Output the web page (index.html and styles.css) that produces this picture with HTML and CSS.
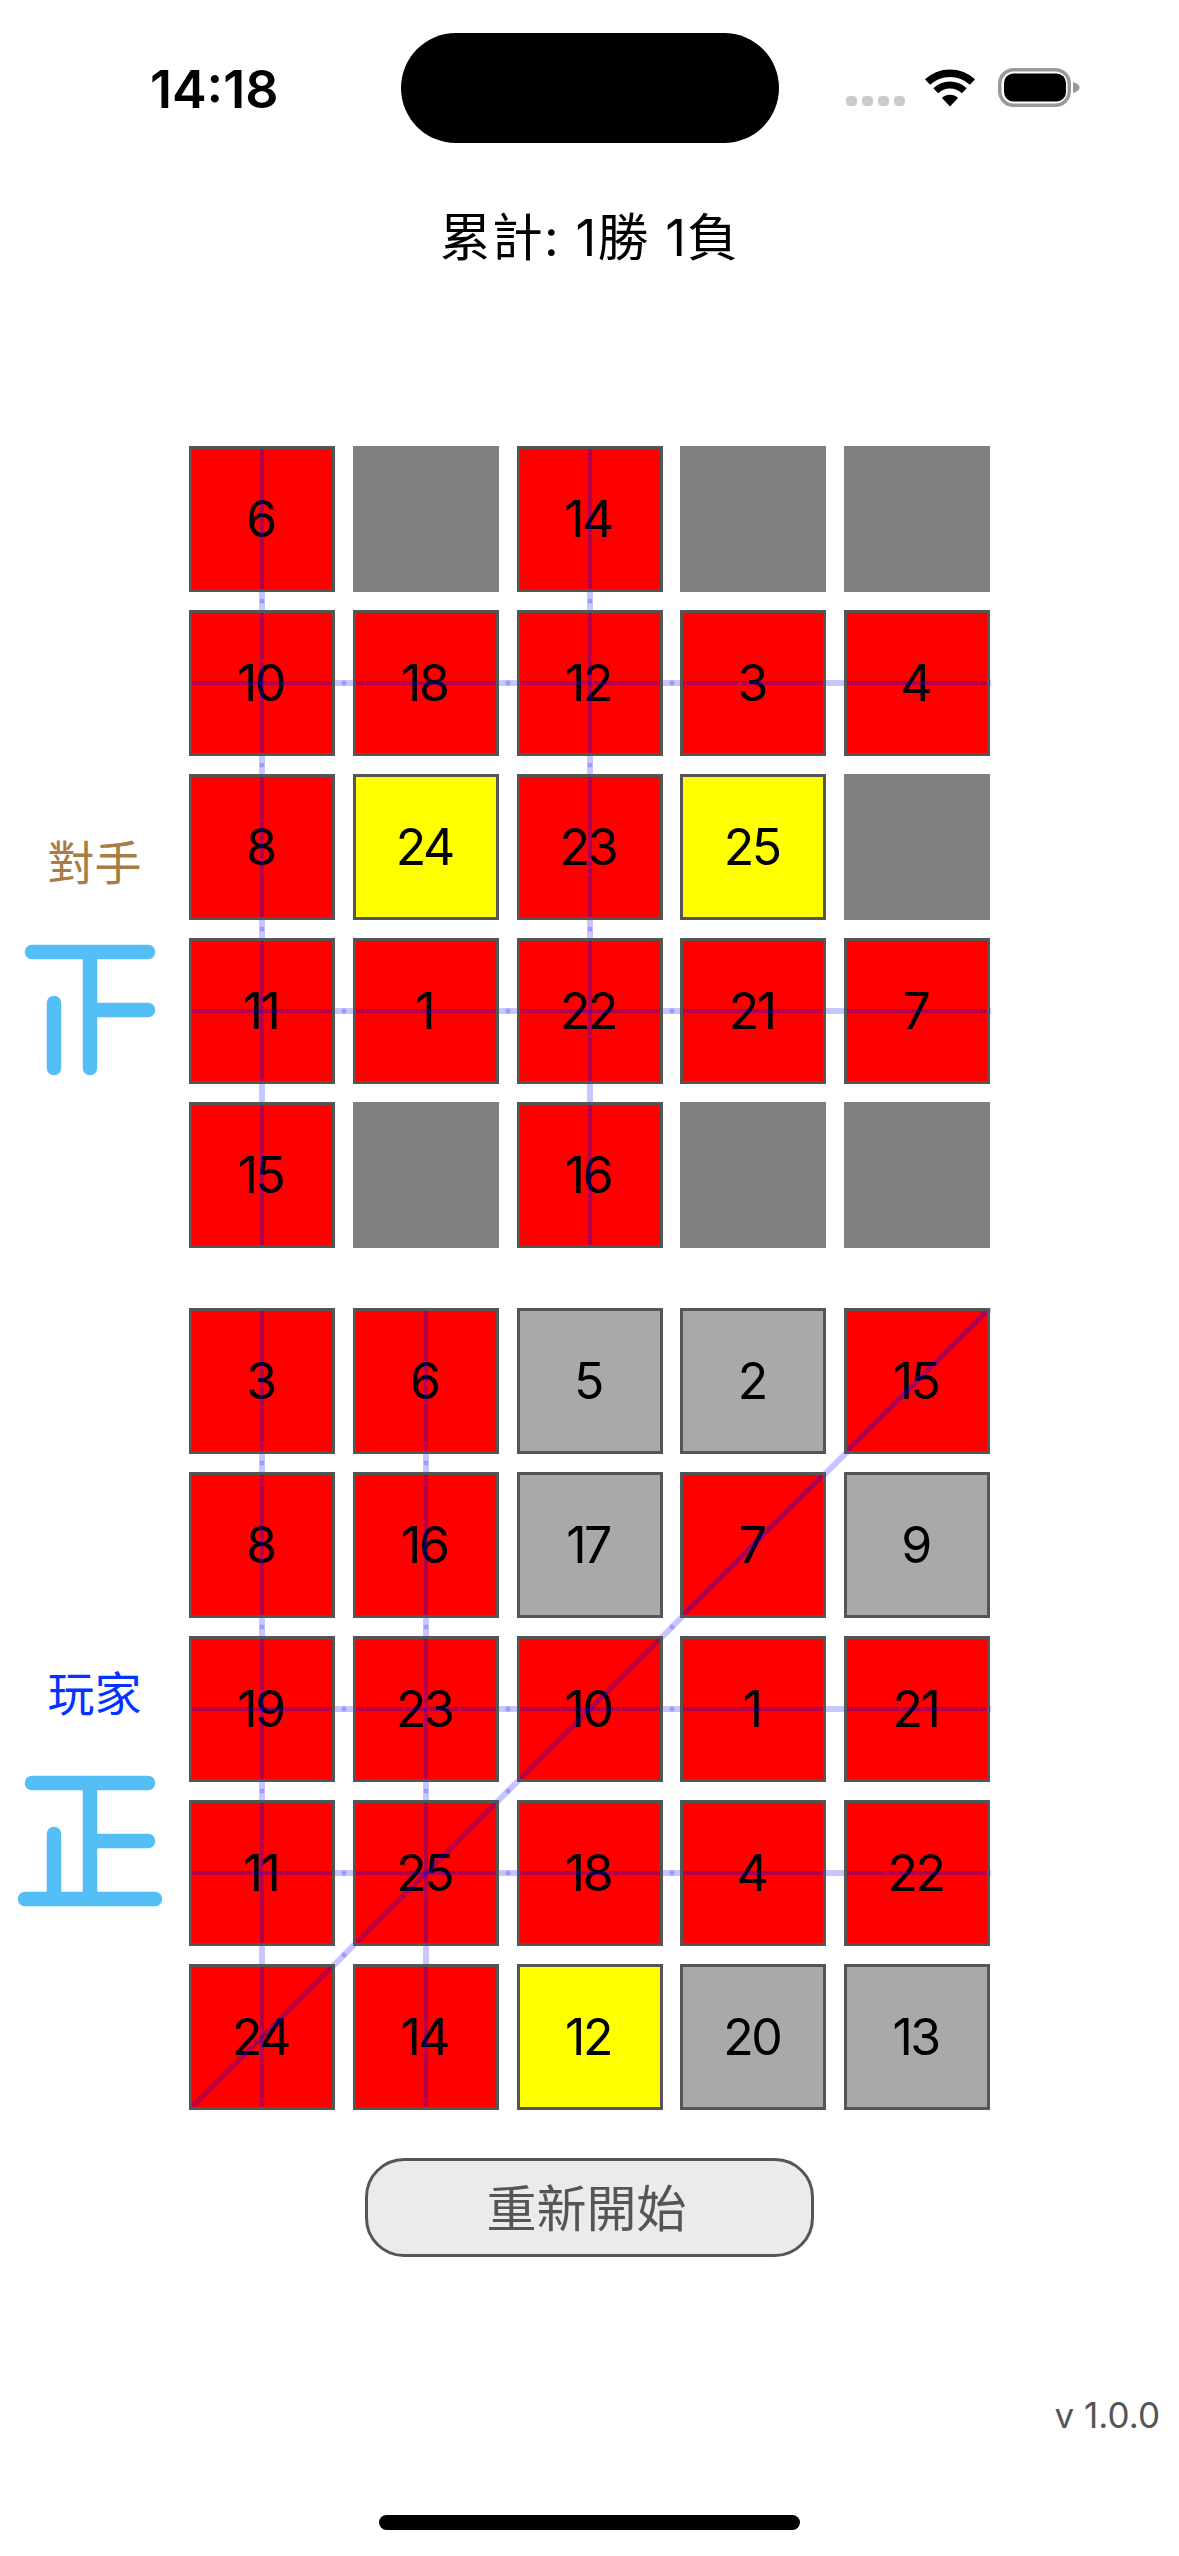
FILE: index.html
```html
<!DOCTYPE html>
<html lang="zh-Hant">
<head>
    <meta charset="UTF-8">
    <meta name="viewport" content="width=device-width, initial-scale=1.0">
    <title>賓果</title>
    <link rel="stylesheet" href="styles.css">
</head>
<body>
    <div class="page">
        <div class="status-bar">
            <div class="time">14:18</div>
            <div class="island"></div>
            <div class="status-icons">
                <div class="signal"><span></span><span></span><span></span><span></span></div>
                <svg class="wifi" width="50" height="38" viewBox="0 0 50 38">
                    <path d="M2.5 13 A33 33 0 0 1 47.5 13" fill="none" stroke="#000" stroke-width="7.5"/>
                    <path d="M10.7 21.7 A21 21 0 0 1 39.3 21.7" fill="none" stroke="#000" stroke-width="7"/>
                    <path d="M25 37.5 L17 29 A11.5 11.5 0 0 1 33 29 Z" fill="#000"/>
                </svg>
                <svg class="battery" width="82" height="39" viewBox="0 0 82 39">
                    <rect x="1.75" y="1.75" width="69.5" height="35.5" rx="14" fill="none" stroke="#999" stroke-width="3.5"/>
                    <rect x="6" y="5.5" width="62" height="28" rx="9.5" fill="#000"/>
                    <path d="M75 14 Q81.5 16 81.5 19.5 Q81.5 23 75 25 Z" fill="#999"/>
                </svg>
            </div>
        </div>

        <div class="score">累計: 1勝 1負</div>

        <div class="match match-opponent">
            <div class="side side-opponent">
                <div class="side-label label-opponent">對手</div>
                <svg class="tally" width="180" height="150" viewBox="0 0 180 150">
                    <path d="M32 20 H148 M90 20 V136 M90 78 H148 M54 71 V136"/>
                </svg>
            </div>
            <div class="board">
                <svg class="wires" width="802" height="802" viewBox="0 0 802 802">
                    <line class="wire" x1="73" y1="0" x2="73" y2="802"/>
                    <line class="wire" x1="401" y1="0" x2="401" y2="802"/>
                    <line class="wire" x1="0" y1="237" x2="802" y2="237"/>
                    <line class="wire" x1="0" y1="565" x2="802" y2="565"/>
                    <line class="knots" pathLength="3" x1="73" y1="155" x2="73" y2="647"/>
                    <line class="knots" pathLength="3" x1="401" y1="155" x2="401" y2="647"/>
                    <line class="knots" pathLength="3" x1="155" y1="237" x2="647" y2="237"/>
                    <line class="knots" pathLength="3" x1="155" y1="565" x2="647" y2="565"/>
                </svg>
                <div class="cell hit">6<i class="mark v"></i></div>
                <div class="cell hidden"></div>
                <div class="cell hit">14<i class="mark v"></i></div>
                <div class="cell hidden"></div>
                <div class="cell hidden"></div>

                <div class="cell hit">10<i class="mark v"></i><i class="mark h"></i></div>
                <div class="cell hit">18<i class="mark h"></i></div>
                <div class="cell hit">12<i class="mark v"></i><i class="mark h"></i></div>
                <div class="cell hit">3<i class="mark h"></i></div>
                <div class="cell hit">4<i class="mark h"></i></div>

                <div class="cell hit">8<i class="mark v"></i></div>
                <div class="cell last">24</div>
                <div class="cell hit">23<i class="mark v"></i></div>
                <div class="cell last">25</div>
                <div class="cell hidden"></div>

                <div class="cell hit">11<i class="mark v"></i><i class="mark h"></i></div>
                <div class="cell hit">1<i class="mark h"></i></div>
                <div class="cell hit">22<i class="mark v"></i><i class="mark h"></i></div>
                <div class="cell hit">21<i class="mark h"></i></div>
                <div class="cell hit">7<i class="mark h"></i></div>

                <div class="cell hit">15<i class="mark v"></i></div>
                <div class="cell hidden"></div>
                <div class="cell hit">16<i class="mark v"></i></div>
                <div class="cell hidden"></div>
                <div class="cell hidden"></div>
            </div>
        </div>

        <div class="match match-player">
            <div class="side side-player">
                <div class="side-label label-player">玩家</div>
                <svg class="tally" width="180" height="150" viewBox="0 0 180 150">
                    <path d="M32 20 H148 M90 20 V136 M90 78 H148 M54 71 V136 M25 136 H155"/>
                </svg>
            </div>
            <div class="board">
                <svg class="wires" width="802" height="802" viewBox="0 0 802 802">
                    <line class="wire" x1="73" y1="0" x2="73" y2="802"/>
                    <line class="wire" x1="237" y1="0" x2="237" y2="802"/>
                    <line class="wire" x1="0" y1="401" x2="802" y2="401"/>
                    <line class="wire" x1="0" y1="565" x2="802" y2="565"/>
                    <line class="wire" x1="0" y1="802" x2="802" y2="0"/>
                    <line class="knots" pathLength="3" x1="73" y1="155" x2="73" y2="647"/>
                    <line class="knots" pathLength="3" x1="237" y1="155" x2="237" y2="647"/>
                    <line class="knots" pathLength="3" x1="155" y1="401" x2="647" y2="401"/>
                    <line class="knots" pathLength="3" x1="155" y1="565" x2="647" y2="565"/>
                    <line class="knots" pathLength="3" x1="155" y1="647" x2="647" y2="155"/>
                </svg>
                <div class="cell hit">3<i class="mark v"></i></div>
                <div class="cell hit">6<i class="mark v"></i></div>
                <div class="cell idle">5</div>
                <div class="cell idle">2</div>
                <div class="cell hit">15<i class="mark d"></i></div>

                <div class="cell hit">8<i class="mark v"></i></div>
                <div class="cell hit">16<i class="mark v"></i></div>
                <div class="cell idle">17</div>
                <div class="cell hit">7<i class="mark d"></i></div>
                <div class="cell idle">9</div>

                <div class="cell hit">19<i class="mark v"></i><i class="mark h"></i></div>
                <div class="cell hit">23<i class="mark v"></i><i class="mark h"></i></div>
                <div class="cell hit">10<i class="mark h"></i><i class="mark d"></i></div>
                <div class="cell hit">1<i class="mark h"></i></div>
                <div class="cell hit">21<i class="mark h"></i></div>

                <div class="cell hit">11<i class="mark v"></i><i class="mark h"></i></div>
                <div class="cell hit">25<i class="mark v"></i><i class="mark h"></i><i class="mark d"></i></div>
                <div class="cell hit">18<i class="mark h"></i></div>
                <div class="cell hit">4<i class="mark h"></i></div>
                <div class="cell hit">22<i class="mark h"></i></div>

                <div class="cell hit">24<i class="mark v"></i><i class="mark d"></i></div>
                <div class="cell hit">14<i class="mark v"></i></div>
                <div class="cell last">12</div>
                <div class="cell idle">20</div>
                <div class="cell idle">13</div>
            </div>
        </div>

        <button class="restart" type="button">重新開始</button>

        <div class="version">v 1.0.0</div>

        <div class="home-bar"></div>
    </div>
</body>
</html>
```

FILE: styles.css
```css
/* page */
body {
    margin: 0;
    background-color: #ffffff;
    color: #000000;
    font-family: Inter, "Noto Sans CJK TC", sans-serif;
}
.page {
    display: flex;
    flex-direction: column;
    width: 1179px;
    height: 2556px;
    overflow: hidden;
}

/* status bar */
.status-bar {
    display: grid;
    grid-template-columns: 1fr 378px 1fr;
    height: 110px;
    padding-top: 33px;
}
.time {
    padding: 27px 0 0 150px;
    font-size: 52px;
    font-weight: 600;
    line-height: 60px;
}
.island {
    height: 110px;
    border-radius: 55px;
    background-color: #000000;
}
.status-icons {
    display: flex;
    align-items: flex-end;
    height: 74px;
    padding-left: 67px;
}
.signal {
    display: flex;
    gap: 5px;
    margin-bottom: 1px;
}
.signal span {
    width: 11px;
    height: 10px;
    border-radius: 4px;
    background-color: #cccccc;
}
.wifi {
    margin-left: 20px;
}
.battery {
    margin-left: 23px;
}

/* score */
.score {
    margin-top: 65px;
    font-size: 51px;
    line-height: 60px;
    letter-spacing: 1.2px;
    text-align: center;
}

/* boards */
.match {
    display: flex;
}
.match-opponent {
    margin-top: 178px;
}
.match-player {
    margin-top: 60px;
}
.side {
    display: flex;
    flex-direction: column;
    align-items: center;
    box-sizing: border-box;
    width: 189px;
    height: 802px;
}
.side-opponent {
    padding-top: 387px;
}
.side-player {
    padding-top: 356px;
}
.side-label {
    font-size: 47px;
    line-height: 60px;
}
.label-opponent {
    color: #a97b45;
}
.label-player {
    color: #0433ff;
}
.tally {
    margin-top: 39px;
    margin-left: -9px;
}
.tally path {
    fill: none;
    stroke: #54bef6;
    stroke-width: 14.5;
    stroke-linecap: round;
}
.board {
    position: relative;
    display: grid;
    grid-template-columns: repeat(5, 146px);
    grid-auto-rows: 146px;
    gap: 18px 17.75px;
}
.wires {
    position: absolute;
    top: 0;
    left: 0;
}
.wire {
    stroke: rgba(0, 0, 255, 0.22);
    stroke-width: 6;
}
.knots {
    stroke: rgba(0, 0, 255, 0.22);
    stroke-width: 5;
    stroke-linecap: round;
    stroke-dasharray: 0 1;
}
.cell {
    position: relative;
    display: flex;
    align-items: center;
    justify-content: center;
    box-sizing: border-box;
    padding-right: 3px;
    border: 3px solid #555555;
    font-size: 50px;
    letter-spacing: -2.5px;
}
.hit {
    background-color: #ff0000;
}
.idle {
    background-color: #a9a9a9;
}
.last {
    background-color: #ffff00;
}
.hidden {
    border-color: #808080;
    background-color: #808080;
}

/* bingo line drawn across a cell, over its number */
.mark {
    position: absolute;
    top: 0;
    right: 0;
    bottom: 0;
    left: 0;
}
.mark.v {
    left: calc(50% - 2px);
    right: calc(50% - 2px);
    background-color: rgba(0, 0, 255, 0.3);
}
.mark.h {
    top: calc(50% - 2px);
    bottom: calc(50% - 2px);
    background-color: rgba(0, 0, 255, 0.3);
}
.mark.d {
    background-image: linear-gradient(to bottom right,
        transparent calc(50% - 2.5px),
        rgba(0, 0, 255, 0.3) calc(50% - 2.5px),
        rgba(0, 0, 255, 0.3) calc(50% + 2.5px),
        transparent calc(50% + 2.5px));
}

/* bottom */
.restart {
    align-self: center;
    box-sizing: border-box;
    width: 449px;
    height: 99px;
    margin-top: 48px;
    padding: 0 6px 6px 0;
    border: 3px solid #555555;
    border-radius: 39px;
    background-color: #ebebeb;
    color: #555555;
    font-family: inherit;
    font-size: 50px;
}
.version {
    margin-top: 136px;
    padding-right: 19px;
    color: #555555;
    font-size: 35px;
    line-height: 44px;
    text-align: right;
}
.home-bar {
    align-self: center;
    width: 421px;
    height: 15px;
    margin-top: 78px;
    border-radius: 8px;
    background-color: #000000;
}
```
